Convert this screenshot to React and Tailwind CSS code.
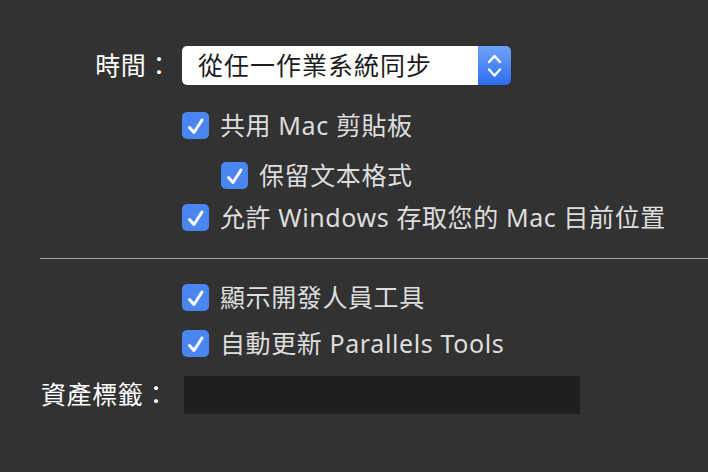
import React from "react";

const font = "font-['Noto_Sans','Noto_Sans_CJK_TC',sans-serif]";

function CheckBox() {
  return (
    <div className="w-[27px] h-[27px] shrink-0 rounded-[5px] bg-[#4a86f0] flex items-center justify-center">
      <svg width="27" height="27" viewBox="0 0 27 27">
        <path d="M7.5 15.5 L12 20.5 L20 8" fill="none" stroke="#fff" strokeWidth="3" strokeLinecap="round" strokeLinejoin="round" />
      </svg>
    </div>
  );
}

function CheckRow({ label, indent, className }) {
  return (
    <div className={`flex items-center h-[27px] ${indent ? "pl-[221px]" : "pl-[182px]"} ${className}`}>
      <CheckBox />
      <span className="ml-[11px] text-[25px] tracking-[0.6px] leading-[27px] text-[#dedede] whitespace-nowrap">{label}</span>
    </div>
  );
}

export default function App() {
  return (
    <div className={`w-full h-[472px] bg-[#323232] pt-[46px] overflow-hidden ${font}`}>
      <div className="flex items-center h-[39px]">
        <div className="w-[182px] pr-[10px] text-right text-[25px] tracking-[0.6px] text-white whitespace-nowrap">時間：</div>
        <div className="flex w-[329px] h-[39px] rounded-[5px] overflow-hidden shadow-[0_0_1px_rgba(0,0,0,0.6)]">
          <div className="flex-1 bg-white flex items-center pl-[16px] text-[25px] tracking-[1px] text-[#1c1c1c] whitespace-nowrap">
            從任一作業系統同步
          </div>
          <div className="w-[33px] h-full bg-gradient-to-b from-[#6ea2f9] to-[#2c6cf2] flex items-center justify-center">
            <svg width="33" height="39" viewBox="0 0 33 39">
              <path d="M11 16 L16.5 10 L22 16" fill="none" stroke="#fff" strokeWidth="2.4" strokeLinecap="round" strokeLinejoin="round" />
              <path d="M11 23.5 L16.5 29.5 L22 23.5" fill="none" stroke="#fff" strokeWidth="2.4" strokeLinecap="round" strokeLinejoin="round" />
            </svg>
          </div>
        </div>
      </div>

      <CheckRow label="共用 Mac 剪貼板" className="mt-[27px]" />
      <CheckRow label="保留文本格式" indent className="mt-[23px]" />
      <CheckRow label="允許 Windows 存取您的 Mac 目前位置" className="mt-[15px]" />

      <div className="ml-[40px] mt-[27px] h-px bg-[#9c9c9c]" />

      <CheckRow label="顯示開發人員工具" className="mt-[25px]" />
      <CheckRow label="自動更新 Parallels Tools" className="mt-[19px]" />

      <div className="flex items-center mt-[19px] h-[38px]">
        <div className="w-[184px] pr-[15px] text-right text-[25px] tracking-[0.6px] text-white whitespace-nowrap">資產標籤：</div>
        <div className="w-[396px] h-[38px] bg-[#1f1f1f]" />
      </div>
    </div>
  );
}
